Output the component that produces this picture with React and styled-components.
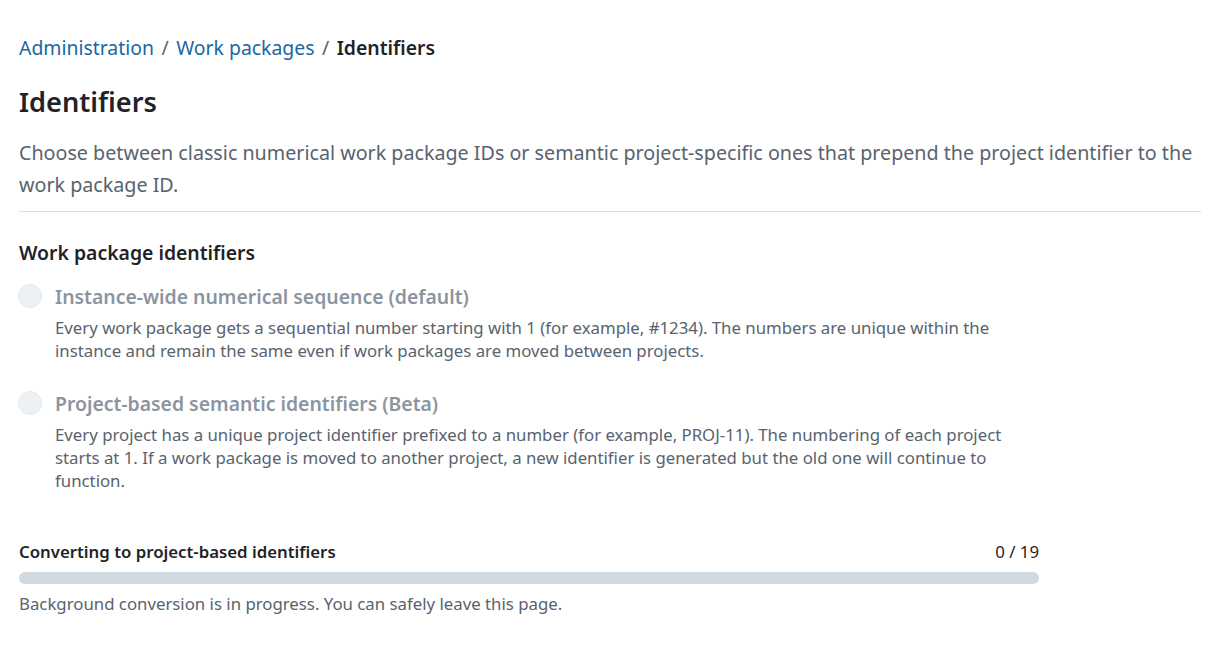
import React from "react";
import styled, { createGlobalStyle } from "styled-components";

const Global = createGlobalStyle`
  body {
    margin: 0;
    background: #ffffff;
    font-family: "Noto Sans", "Open Sans", sans-serif;
    color: #1f2328;
  }
`;

const Page = styled.div`
  padding: 30px 15px 0 19px;
  display: flex;
  flex-direction: column;
`;

const Breadcrumb = styled.nav`
  display: flex;
  align-items: center;
  gap: 7.5px;
  font-size: 19.4px;
  line-height: 36px;
`;

const Crumb = styled.a`
  color: #1a67a3;
  text-decoration: none;
`;

const Sep = styled.span`
  color: #59636e;
`;

const Current = styled.span`
  font-weight: 600;
  color: #1f2328;
`;

const Title = styled.h1`
  margin: 16px 0 0;
  font-size: 27.2px;
  font-weight: 600;
  line-height: 40px;
`;

const Lead = styled.p`
  margin: 15px 0 0;
  font-size: 19.7px;
  line-height: 32px;
  color: #59636e;
`;

const Divider = styled.hr`
  margin: 10px 0 0;
  border: none;
  border-top: 1px solid #d8dee4;
`;

const SectionTitle = styled.h2`
  margin: 26px 0 0;
  font-size: 19.4px;
  font-weight: 600;
  line-height: 30px;
`;

const Options = styled.div`
  display: flex;
  flex-direction: column;
  gap: 27px;
  margin-top: 14px;
  width: 1020px;
`;

const Option = styled.label`
  display: grid;
  grid-template-columns: 24px 1fr;
  column-gap: 12px;
`;

const Radio = styled.span`
  width: 24px;
  height: 24px;
  margin: 2px 0 0 -1px;
  border-radius: 50%;
  background: #eef1f4;
  border: 1px solid #e3e8ec;
  box-sizing: border-box;
`;

const OptionBody = styled.div`
  display: flex;
  flex-direction: column;
  gap: 5px;
`;

const OptionLabel = styled.span`
  font-size: 19.4px;
  font-weight: 600;
  line-height: 30px;
  color: #8c959f;
`;

const OptionHint = styled.span`
  font-size: 16.8px;
  line-height: 22.7px;
  color: #59636e;
`;

const Progress = styled.div`
  margin-top: 47px;
  width: 1020px;
  display: flex;
  flex-direction: column;
`;

const ProgressHead = styled.div`
  display: flex;
  justify-content: space-between;
  font-size: 16.8px;
  line-height: 24px;
`;

const ProgressLabel = styled.span`
  font-weight: 600;
`;

const Track = styled.div`
  margin-top: 8px;
  height: 12px;
  border-radius: 6px;
  background: #d1d9e0;
  overflow: hidden;
`;

const Fill = styled.div`
  height: 100%;
  background: #1a67a3;
`;

const ProgressNote = styled.p`
  margin: 8px 0 0;
  font-size: 16.8px;
  line-height: 24px;
  color: #59636e;
`;

const options = [
  {
    label: "Instance-wide numerical sequence (default)",
    hint: "Every work package gets a sequential number starting with 1 (for example, #1234). The numbers are unique within the instance and remain the same even if work packages are moved between projects.",
  },
  {
    label: "Project-based semantic identifiers (Beta)",
    hint: "Every project has a unique project identifier prefixed to a number (for example, PROJ-11). The numbering of each project starts at 1. If a work package is moved to another project, a new identifier is generated but the old one will continue to function.",
  },
];

export default function App() {
  const done = 0;
  const total = 19;
  return (
    <>
      <Global />
      <Page>
        <Breadcrumb>
          <Crumb href="#">Administration</Crumb>
          <Sep>/</Sep>
          <Crumb href="#">Work packages</Crumb>
          <Sep>/</Sep>
          <Current>Identifiers</Current>
        </Breadcrumb>
        <Title>Identifiers</Title>
        <Lead>
          Choose between classic numerical work package IDs or semantic project-specific ones that prepend the project identifier to the work package ID.
        </Lead>
        <Divider />
        <SectionTitle>Work package identifiers</SectionTitle>
        <Options>
          {options.map((o) => (
            <Option key={o.label}>
              <Radio />
              <OptionBody>
                <OptionLabel>{o.label}</OptionLabel>
                <OptionHint>{o.hint}</OptionHint>
              </OptionBody>
            </Option>
          ))}
        </Options>
        <Progress>
          <ProgressHead>
            <ProgressLabel>Converting to project-based identifiers</ProgressLabel>
            <span>{done} / {total}</span>
          </ProgressHead>
          <Track>
            <Fill style={{ width: `${(done / total) * 100}%` }} />
          </Track>
          <ProgressNote>Background conversion is in progress. You can safely leave this page.</ProgressNote>
        </Progress>
      </Page>
    </>
  );
}
